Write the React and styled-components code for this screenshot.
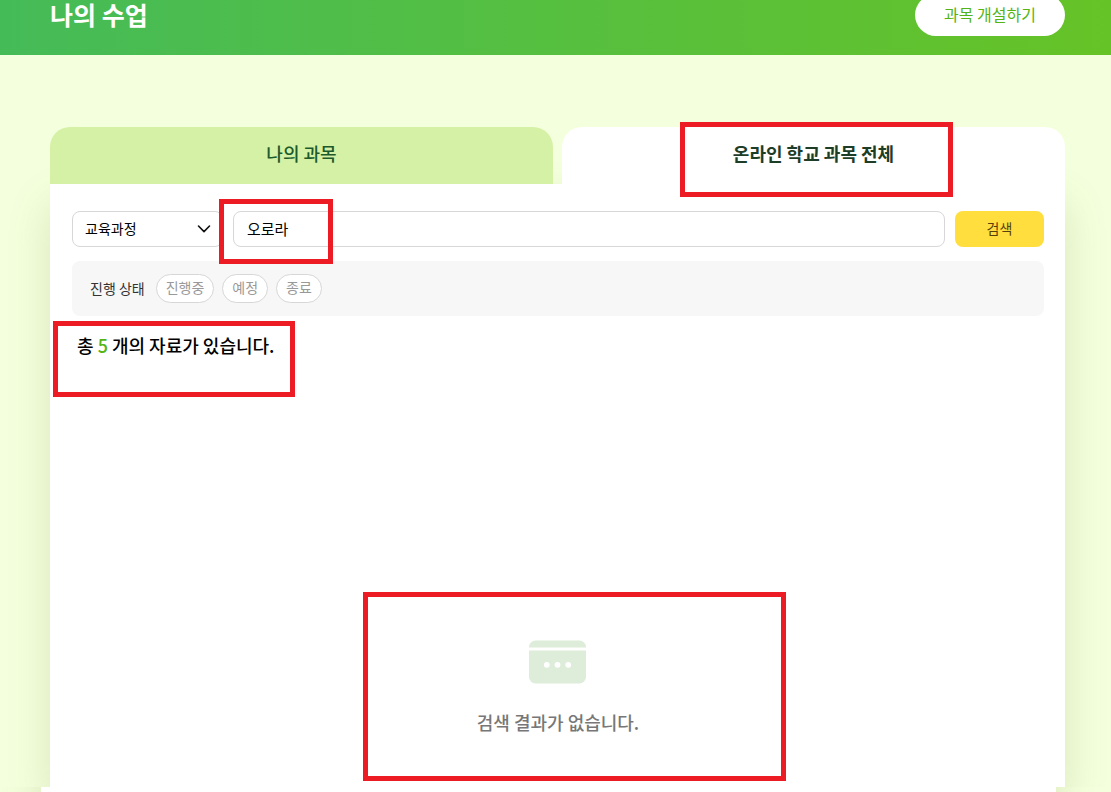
import React, { useState } from 'react';
import styled, { createGlobalStyle, ThemeProvider } from 'styled-components';

const theme = {
  colors: {
    background: '#f4ffdd',
    surface: '#ffffff',
    muted: '#f7f7f7',
    border: '#d7d7d7',
    green: '#54b414',
    darkGreen: '#1c5a2c',
    deepGreen: '#1d3d27',
    tab: '#d5f1a6',
    yellow: '#ffde3e',
    mark: '#ed1c24',
    text: '#000000',
    label: '#333333',
    light: '#999999',
    gray: '#777777',
  },
  shadow: 'rgba(114, 135, 51, 0.2)',
  fontSize: { sm: '14px', md: '16px', lg: '18px', xl: '25px' },
};

const GlobalStyle = createGlobalStyle`
  * {
    box-sizing: border-box;
  }

  body {
    margin: 0;
    background: ${props => props.theme.colors.background};
    color: ${props => props.theme.colors.text};
    font-family: 'Noto Sans CJK KR', sans-serif;
  }

  button, input, select {
    font-family: inherit;
  }
`;

const Page = styled.div`
  display: flex;
  flex-direction: column;
  min-height: 100vh;
`;

const Header = styled.header`
  display: flex;
  align-items: flex-end;
  justify-content: space-between;
  height: 55px;
  padding: 0 46px 19px 50px;
  background: linear-gradient(90deg, #45bb58, #66c327);
`;

const Title = styled.h1`
  margin: 0;
  padding-bottom: 8px;
  color: white;
  font-size: ${props => props.theme.fontSize.xl};
  font-weight: 700;
  line-height: 28px;
`;

const CreateButton = styled.button`
  flex: none;
  width: 150px;
  height: 42px;
  padding: 0 0 2px;
  border: none;
  border-radius: 21px;
  background: white;
  color: ${props => props.theme.colors.green};
  font-size: ${props => props.theme.fontSize.md};
  font-weight: 400;
  cursor: pointer;
`;

const Main = styled.main`
  padding: 72px 46px 0 50px;
`;

const TabList = styled.div`
  display: flex;
  gap: 9px;
`;

const TabItem = styled.div`
  position: relative;
  z-index: 1;
  flex: 1;
`;

const Tab = styled.button`
  display: block;
  width: 100%;
  height: 57px;
  padding: 0 0 6px;
  border: none;
  border-radius: 20px 20px 0 0;
  background: ${props => (props.$active ? props.theme.colors.surface : props.theme.colors.tab)};
  color: ${props => (props.$active ? props.theme.colors.deepGreen : props.theme.colors.darkGreen)};
  font-size: ${props => props.theme.fontSize.lg};
  font-weight: ${props => (props.$active ? 700 : 500)};
  cursor: pointer;
`;

const Panel = styled.section`
  padding: 27px 21px 0 22px;
  background: ${props => props.theme.colors.surface};
  box-shadow: 0 20px 40px ${props => props.theme.shadow};
`;

const SearchForm = styled.form`
  display: flex;
  gap: 10px;
`;

const SelectBox = styled.div`
  display: grid;
  align-items: center;
  width: 151px;

  > * {
    grid-area: 1 / 1;
  }

  svg {
    justify-self: end;
    margin-right: 12px;
    pointer-events: none;
  }
`;

const Select = styled.select`
  appearance: none;
  width: 100%;
  height: 36px;
  padding: 0 12px 2px;
  border: 1px solid ${props => props.theme.colors.border};
  border-radius: 8px;
  background: white;
  color: ${props => props.theme.colors.text};
  font-size: ${props => props.theme.fontSize.sm};
`;

const InputBox = styled.div`
  position: relative;
  flex: 1;
`;

const SearchInput = styled.input`
  display: block;
  width: 100%;
  height: 36px;
  padding: 0 13px 2px;
  border: 1px solid ${props => props.theme.colors.border};
  border-radius: 8px;
  outline: none;
  color: ${props => props.theme.colors.text};
  font-size: 15px;
`;

const SearchButton = styled.button`
  width: 89px;
  height: 36px;
  padding: 0 0 2px;
  border: none;
  border-radius: 8px;
  background: ${props => props.theme.colors.yellow};
  color: #57400c;
  font-size: ${props => props.theme.fontSize.sm};
  font-weight: 400;
  cursor: pointer;
`;

const FilterBar = styled.div`
  display: flex;
  align-items: center;
  gap: 8px;
  height: 55px;
  margin-top: 14px;
  padding: 0 18px;
  border-radius: 8px;
  background: ${props => props.theme.colors.muted};
`;

const FilterLabel = styled.span`
  margin-right: 3px;
  padding-bottom: 2px;
  color: ${props => props.theme.colors.label};
  font-size: ${props => props.theme.fontSize.sm};
`;

const Chip = styled.button`
  height: 29px;
  padding: 0 9px 4px;
  border: 1px solid ${props => props.theme.colors.border};
  border-radius: 15px;
  background: white;
  color: ${props => props.theme.colors.light};
  font-size: ${props => props.theme.fontSize.sm};
  cursor: pointer;
`;

const CountRow = styled.div`
  position: relative;
  padding: 15px 5px 0;
`;

const CountText = styled.p`
  margin: 0;
  font-size: ${props => props.theme.fontSize.lg};
  font-weight: 500;
  line-height: 28px;

  strong {
    color: ${props => props.theme.colors.green};
    font-weight: 500;
  }
`;

const EmptyState = styled.div`
  position: relative;
  display: flex;
  flex-direction: column;
  align-items: center;
  gap: 24px;
  padding: 281px 0 51px;
`;

const EmptyText = styled.p`
  margin: 0;
  color: ${props => props.theme.colors.gray};
  font-size: ${props => props.theme.fontSize.lg};
  font-weight: 500;
  line-height: 28px;
`;

const NextSection = styled.div`
  display: flex;
  flex: 1 0 5px;
  align-items: center;
  min-height: 0;
  max-height: 5px;
  padding: 0 55px 0 41px;
  overflow: hidden;
  background: ${props => props.theme.colors.background};
  z-index: 1;
`;

const NextPanel = styled.div`
  flex: 1;
  height: 120px;
  background: ${props => props.theme.colors.surface};
  box-shadow: 0 0 40px ${props => props.theme.shadow};
`;

const Mark = styled.div`
  position: absolute;
  z-index: 2;
  top: ${props => props.$top}px;
  left: ${props => props.$left};
  width: ${props => props.$width}px;
  height: ${props => props.$height}px;
  border: 5px solid ${props => props.theme.colors.mark};
  pointer-events: none;
`;

const statuses = ['진행중', '예정', '종료'];

function ChevronIcon() {
  return (
    <svg width="14" height="10" viewBox="0 0 14 10" fill="none" aria-hidden="true">
      <path d="M1.5 2L7 7.6L12.5 2" stroke="#111" strokeWidth="1.6" strokeLinecap="round" strokeLinejoin="round" />
    </svg>
  );
}

function EmptyIcon() {
  return (
    <svg width="58" height="44" viewBox="0 0 58 44" aria-hidden="true">
      <path d="M0 7.5V7A6.5 6.5 0 0 1 6.5 0.5H50.5A6.5 6.5 0 0 1 57 7V7.5Z" fill="#deedda" />
      <path d="M0 10.5H57V37A6.5 6.5 0 0 1 50.5 43.5H6.5A6.5 6.5 0 0 1 0 37Z" fill="#deedda" />
      <circle cx="17.8" cy="24.8" r="2.9" fill="white" />
      <circle cx="28.5" cy="24.8" r="2.9" fill="white" />
      <circle cx="39.2" cy="24.8" r="2.9" fill="white" />
    </svg>
  );
}

function App() {
  const [activeTab, setActiveTab] = useState('all');
  const [keyword, setKeyword] = useState('오로라');

  const handleSubmit = (event) => {
    event.preventDefault();
  };

  return (
    <ThemeProvider theme={theme}>
      <GlobalStyle />
      <Page>
        <Header>
          <Title>나의 수업</Title>
          <CreateButton type="button">과목 개설하기</CreateButton>
        </Header>

        <Main>
          <TabList role="tablist">
            <TabItem>
              <Tab role="tab" aria-selected={activeTab === 'mine'} $active={activeTab === 'mine'} onClick={() => setActiveTab('mine')}>
                나의 과목
              </Tab>
            </TabItem>
            <TabItem>
              <Tab role="tab" aria-selected={activeTab === 'all'} $active={activeTab === 'all'} onClick={() => setActiveTab('all')}>
                온라인 학교 과목 전체
              </Tab>
              <Mark $top={-5} $left="118px" $width={273} $height={75} />
            </TabItem>
          </TabList>

          <Panel>
            <SearchForm onSubmit={handleSubmit}>
              <SelectBox>
                <Select aria-label="교육과정" defaultValue="curriculum">
                  <option value="curriculum">교육과정</option>
                </Select>
                <ChevronIcon />
              </SelectBox>
              <InputBox>
                <SearchInput
                  type="text"
                  aria-label="검색"
                  value={keyword}
                  onChange={event => setKeyword(event.target.value)}
                />
                <Mark $top={-12} $left="-14px" $width={114} $height={65} />
              </InputBox>
              <SearchButton type="submit">검색</SearchButton>
            </SearchForm>

            <FilterBar>
              <FilterLabel>진행 상태</FilterLabel>
              {statuses.map(status => (
                <Chip key={status} type="button">{status}</Chip>
              ))}
            </FilterBar>

            <CountRow>
              <CountText>
                총 <strong>5</strong> 개의 자료가 있습니다.
              </CountText>
              <Mark $top={5} $left="-19px" $width={242} $height={76} />
            </CountRow>

            <EmptyState>
              <EmptyIcon />
              <EmptyText>검색 결과가 없습니다.</EmptyText>
              <Mark $top={233} $left="calc(50% - 195px)" $width={423} $height={189} />
            </EmptyState>
          </Panel>
        </Main>

        <NextSection>
          <NextPanel />
        </NextSection>
      </Page>
    </ThemeProvider>
  );
}

export default App;
